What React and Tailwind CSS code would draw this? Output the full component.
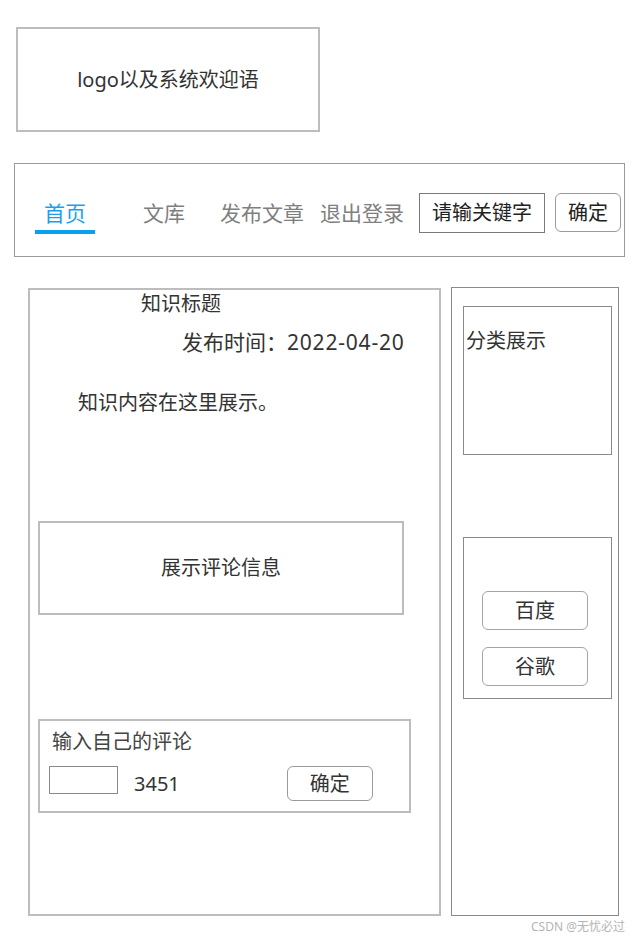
import React from 'react';

const font = { fontFamily: '"Noto Sans", "Noto Sans CJK SC", sans-serif' };

const NavLink = ({ children, className = '' }) => (
  <span className={`text-[21px] leading-[28px] text-[#7f7f7f] ${className}`}>{children}</span>
);

const App = () => {
  return (
    <div className="w-[639px] h-[941px] bg-white text-[#333] overflow-hidden" style={font}>
      {/* logo */}
      <div className="ml-[16px] pt-[27px]">
        <div className="w-[304px] h-[105px] border-2 border-[#bdbdbd] flex items-center justify-center">
          <span className="text-[20px] leading-[28px]">logo以及系统欢迎语</span>
        </div>
      </div>

      {/* nav */}
      <div className="ml-[14px] mt-[31px] w-[611px] h-[94px] border border-[#9a9a9a] flex items-center pt-[5px]">
        <div className="ml-[20px] w-[60px] mt-[7px] flex flex-col items-center">
          <span className="text-[21px] leading-[28px] text-[#1a9ff0]">首页</span>
          <span className="mt-[3px] w-[60px] h-[4px] bg-[#0aa0f0]" />
        </div>
        <NavLink className="ml-[48px]">文库</NavLink>
        <NavLink className="ml-[35px]">发布文章</NavLink>
        <NavLink className="ml-[16px]">退出登录</NavLink>
        <div className="ml-[15px] w-[126px] h-[40px] border border-[#7a7a7a] flex items-center justify-center text-[20px] text-[#222]">
          请输关键字
        </div>
        <div className="ml-[10px] w-[66px] h-[39px] border border-[#9a9a9a] rounded-md flex items-center justify-center text-[20px] text-[#222]">
          确定
        </div>
      </div>

      {/* main */}
      <div className="ml-[28px] mt-[31px] flex gap-[10px]">
        <div className="w-[413px] h-[628px] border-2 border-[#bdbdbd] flex flex-col">
          <span className="ml-[111px] text-[20px] leading-[28px]">知识标题</span>
          <span className="ml-[152px] mt-[10px] text-[21px] leading-[28px]">
            发布时间：<span className="tracking-[0.8px]">2022-04-20</span>
          </span>
          <span className="ml-[48px] mt-[33px] text-[20px] leading-[28px]">知识内容在这里展示。</span>

          <div className="ml-[8px] mt-[104px] w-[366px] h-[94px] border-2 border-[#bdbdbd] flex items-center justify-center">
            <span className="text-[20px] leading-[28px]">展示评论信息</span>
          </div>

          <div className="ml-[8px] mt-[104px] w-[373px] h-[94px] border-2 border-[#bdbdbd] flex flex-col">
            <span className="ml-[12px] mt-[7px] text-[20px] leading-[28px] text-[#444]">输入自己的评论</span>
            <div className="mt-[10px] flex items-start">
              <div className="ml-[9px] w-[69px] h-[28px] border border-[#8a8a8a]" />
              <span className="ml-[16px] mt-[4px] text-[20px] leading-[28px]">3451</span>
              <div className="ml-[107px] w-[86px] h-[35px] border border-[#9a9a9a] rounded-md flex items-center justify-center text-[20px]">
                确定
              </div>
            </div>
          </div>
        </div>

        <div className="-mt-[1px] w-[168px] h-[629px] border border-[#8a8a8a] flex flex-col">
          <div className="ml-[11px] mt-[18px] w-[149px] h-[149px] border border-[#8a8a8a]">
            <span className="block ml-[2px] mt-[20px] text-[20px] leading-[28px]">分类展示</span>
          </div>
          <div className="ml-[11px] mt-[82px] w-[149px] h-[162px] border border-[#8a8a8a] flex flex-col">
            <div className="ml-[18px] mt-[53px] w-[106px] h-[39px] border border-[#a5a5a5] rounded-md flex items-center justify-center text-[20px]">
              百度
            </div>
            <div className="ml-[18px] mt-[17px] w-[106px] h-[39px] border border-[#a5a5a5] rounded-md flex items-center justify-center text-[20px]">
              谷歌
            </div>
          </div>
        </div>
      </div>

      {/* watermark */}
      <div className="mt-[3px] pr-[14px] flex justify-end">
        <span className="text-[12px] leading-[16px] text-[#b5b5b5]">CSDN @无忧必过</span>
      </div>
    </div>
  );
};

export default App;
